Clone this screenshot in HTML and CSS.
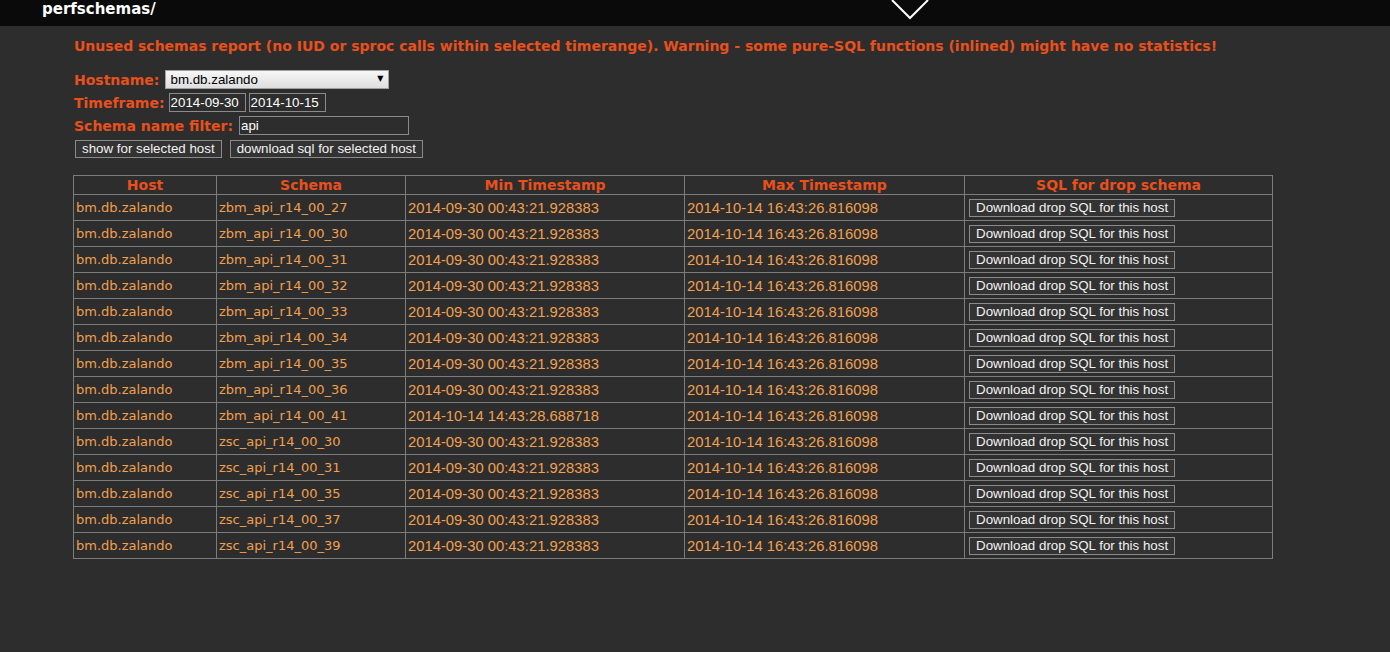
FILE: index.html
```html
<!DOCTYPE html>
<html>
<head>
<meta charset="utf-8">
<title>perfschemas</title>
<link rel="stylesheet" href="styles.css">
</head>
<body>
<div class="topbar">
  <span class="brand">perfschemas/</span>
  <svg class="chevron" width="40" height="20" viewBox="0 0 40 20"><polyline points="2,0 20,18 38,0" fill="none" stroke="#fff" stroke-width="2"/></svg>
</div>
<div class="content">
  <p class="warning">Unused schemas report (no IUD or sproc calls within selected timerange). Warning - some pure-SQL functions (inlined) might have no statistics!</p>
  <form class="filters">
    <div class="row"><span class="label">Hostname:</span><span class="select-wrap"><select class="select"><option>bm.db.zalando</option></select></span></div>
    <div class="row"><span class="label">Timeframe:</span><input class="field date first" value="2014-09-30"><input class="field date second" value="2014-10-15"></div>
    <div class="row"><span class="label">Schema name filter:</span><input class="field filter" value="api"></div>
    <div class="row buttons"><button type="button" class="btn">show for selected host</button><button type="button" class="btn">download sql for selected host</button></div>
  </form>
  <table class="report">
    <thead>
      <tr><th class="c-host">Host</th><th class="c-schema">Schema</th><th class="c-min">Min Timestamp</th><th class="c-max">Max Timestamp</th><th class="c-sql">SQL for drop schema</th></tr>
    </thead>
    <tbody>
      <tr><td>bm.db.zalando</td><td>zbm_api_r14_00_27</td><td class="ts">2014-09-30 00:43:21.928383</td><td class="ts">2014-10-14 16:43:26.816098</td><td><button type="button" class="btn cell-btn">Download drop SQL for this host</button></td></tr>
      <tr><td>bm.db.zalando</td><td>zbm_api_r14_00_30</td><td class="ts">2014-09-30 00:43:21.928383</td><td class="ts">2014-10-14 16:43:26.816098</td><td><button type="button" class="btn cell-btn">Download drop SQL for this host</button></td></tr>
      <tr><td>bm.db.zalando</td><td>zbm_api_r14_00_31</td><td class="ts">2014-09-30 00:43:21.928383</td><td class="ts">2014-10-14 16:43:26.816098</td><td><button type="button" class="btn cell-btn">Download drop SQL for this host</button></td></tr>
      <tr><td>bm.db.zalando</td><td>zbm_api_r14_00_32</td><td class="ts">2014-09-30 00:43:21.928383</td><td class="ts">2014-10-14 16:43:26.816098</td><td><button type="button" class="btn cell-btn">Download drop SQL for this host</button></td></tr>
      <tr><td>bm.db.zalando</td><td>zbm_api_r14_00_33</td><td class="ts">2014-09-30 00:43:21.928383</td><td class="ts">2014-10-14 16:43:26.816098</td><td><button type="button" class="btn cell-btn">Download drop SQL for this host</button></td></tr>
      <tr><td>bm.db.zalando</td><td>zbm_api_r14_00_34</td><td class="ts">2014-09-30 00:43:21.928383</td><td class="ts">2014-10-14 16:43:26.816098</td><td><button type="button" class="btn cell-btn">Download drop SQL for this host</button></td></tr>
      <tr><td>bm.db.zalando</td><td>zbm_api_r14_00_35</td><td class="ts">2014-09-30 00:43:21.928383</td><td class="ts">2014-10-14 16:43:26.816098</td><td><button type="button" class="btn cell-btn">Download drop SQL for this host</button></td></tr>
      <tr><td>bm.db.zalando</td><td>zbm_api_r14_00_36</td><td class="ts">2014-09-30 00:43:21.928383</td><td class="ts">2014-10-14 16:43:26.816098</td><td><button type="button" class="btn cell-btn">Download drop SQL for this host</button></td></tr>
      <tr><td>bm.db.zalando</td><td>zbm_api_r14_00_41</td><td class="ts">2014-10-14 14:43:28.688718</td><td class="ts">2014-10-14 16:43:26.816098</td><td><button type="button" class="btn cell-btn">Download drop SQL for this host</button></td></tr>
      <tr><td>bm.db.zalando</td><td>zsc_api_r14_00_30</td><td class="ts">2014-09-30 00:43:21.928383</td><td class="ts">2014-10-14 16:43:26.816098</td><td><button type="button" class="btn cell-btn">Download drop SQL for this host</button></td></tr>
      <tr><td>bm.db.zalando</td><td>zsc_api_r14_00_31</td><td class="ts">2014-09-30 00:43:21.928383</td><td class="ts">2014-10-14 16:43:26.816098</td><td><button type="button" class="btn cell-btn">Download drop SQL for this host</button></td></tr>
      <tr><td>bm.db.zalando</td><td>zsc_api_r14_00_35</td><td class="ts">2014-09-30 00:43:21.928383</td><td class="ts">2014-10-14 16:43:26.816098</td><td><button type="button" class="btn cell-btn">Download drop SQL for this host</button></td></tr>
      <tr><td>bm.db.zalando</td><td>zsc_api_r14_00_37</td><td class="ts">2014-09-30 00:43:21.928383</td><td class="ts">2014-10-14 16:43:26.816098</td><td><button type="button" class="btn cell-btn">Download drop SQL for this host</button></td></tr>
      <tr><td>bm.db.zalando</td><td>zsc_api_r14_00_39</td><td class="ts">2014-09-30 00:43:21.928383</td><td class="ts">2014-10-14 16:43:26.816098</td><td><button type="button" class="btn cell-btn">Download drop SQL for this host</button></td></tr>
    </tbody>
  </table>
</div>
</body>
</html>
```
FILE: styles.css
```css
html, body {
  margin: 0;
  padding: 0;
}
body {
  background: #2d2d2d;
  font-family: "DejaVu Sans", sans-serif;
  color: #f0a050;
  min-height: 652px;
}
.topbar {
  position: relative;
  height: 26px;
  background: #0a0a0a;
}
.brand {
  display: block;
  padding-left: 42px;
  font-size: 15px;
  font-weight: bold;
  line-height: 18px;
  color: #fff;
}
.chevron {
  position: absolute;
  left: 890px;
  top: 0;
}
.content {
  padding: 11px 0 0 73px;
}
.warning {
  margin: 0;
  padding-left: 1px;
  font-size: 14px;
  font-weight: bold;
  line-height: 18px;
  color: #e8501c;
}
.filters {
  margin: 13px 0 0 0;
  padding-left: 1px;
}
.row {
  height: 23px;
  display: flex;
  align-items: center;
}
.label {
  font-size: 14px;
  font-weight: bold;
  color: #e8501c;
}
.select-wrap {
  position: relative;
  display: inline-block;
  margin-left: 6px;
}
.select-wrap::after {
  content: "\25BC";
  position: absolute;
  right: 6px;
  top: 4px;
  font-family: "DejaVu Sans", sans-serif;
  font-size: 8px;
  color: #000;
  pointer-events: none;
}
.select {
  appearance: none;
  -webkit-appearance: none;
  display: block;
  width: 224px;
  height: 19px;
  margin: 0;
  padding: 0 4px;
  border: 1px solid #a0a0a0;
  border-radius: 0;
  background: linear-gradient(#f7f7f7, #dedede);
  color: #000;
  font-family: "Liberation Sans", Arial, sans-serif;
  font-size: 13.33px;
}
.field {
  box-sizing: border-box;
  height: 19px;
  margin: 0;
  padding: 1px 1px;
  border: 1px solid #8a8a8a;
  background: #2d2d2d;
  color: #fff;
  font-family: "Liberation Sans", Arial, sans-serif;
  font-size: 13.33px;
  outline: none;
}
.date {
  width: 77px;
}
.date.first {
  margin-left: 4px;
}
.date.second {
  margin-left: 3px;
}
.filter {
  width: 170px;
  margin-left: 6px;
}
.buttons {
  padding-left: 1px;
}
.btn {
  box-sizing: border-box;
  height: 18px;
  margin: 0;
  padding: 0 6px;
  border: 1px solid #8a8a8a;
  border-radius: 0;
  background: #333;
  color: #f2f2f2;
  font-family: "Liberation Sans", Arial, sans-serif;
  font-size: 13.33px;
  line-height: 16px;
}
.buttons .btn + .btn {
  margin-left: 8px;
}
.report {
  margin-top: 15px;
  border-collapse: collapse;
  width: 1200px;
}
.report th, .report td {
  border: 1px solid #7c7c7c;
  padding: 0 2px;
  text-align: left;
}
.report th {
  height: 18px;
  font-size: 14px;
  font-weight: bold;
  color: #e8501c;
  text-align: center;
  line-height: 16px;
}
.report td {
  height: 25px;
  font-size: 13px;
  color: #f0a050;
  white-space: nowrap;
}
.report td.ts {
  font-family: "Liberation Sans", Arial, sans-serif;
  font-size: 14.8px;
}
.c-host { width: 138px; }
.c-schema { width: 184px; }
.c-min { width: 274px; }
.c-max { width: 275px; }
.c-sql { width: 303px; }
.cell-btn {
  margin-left: 2px;
}
```
